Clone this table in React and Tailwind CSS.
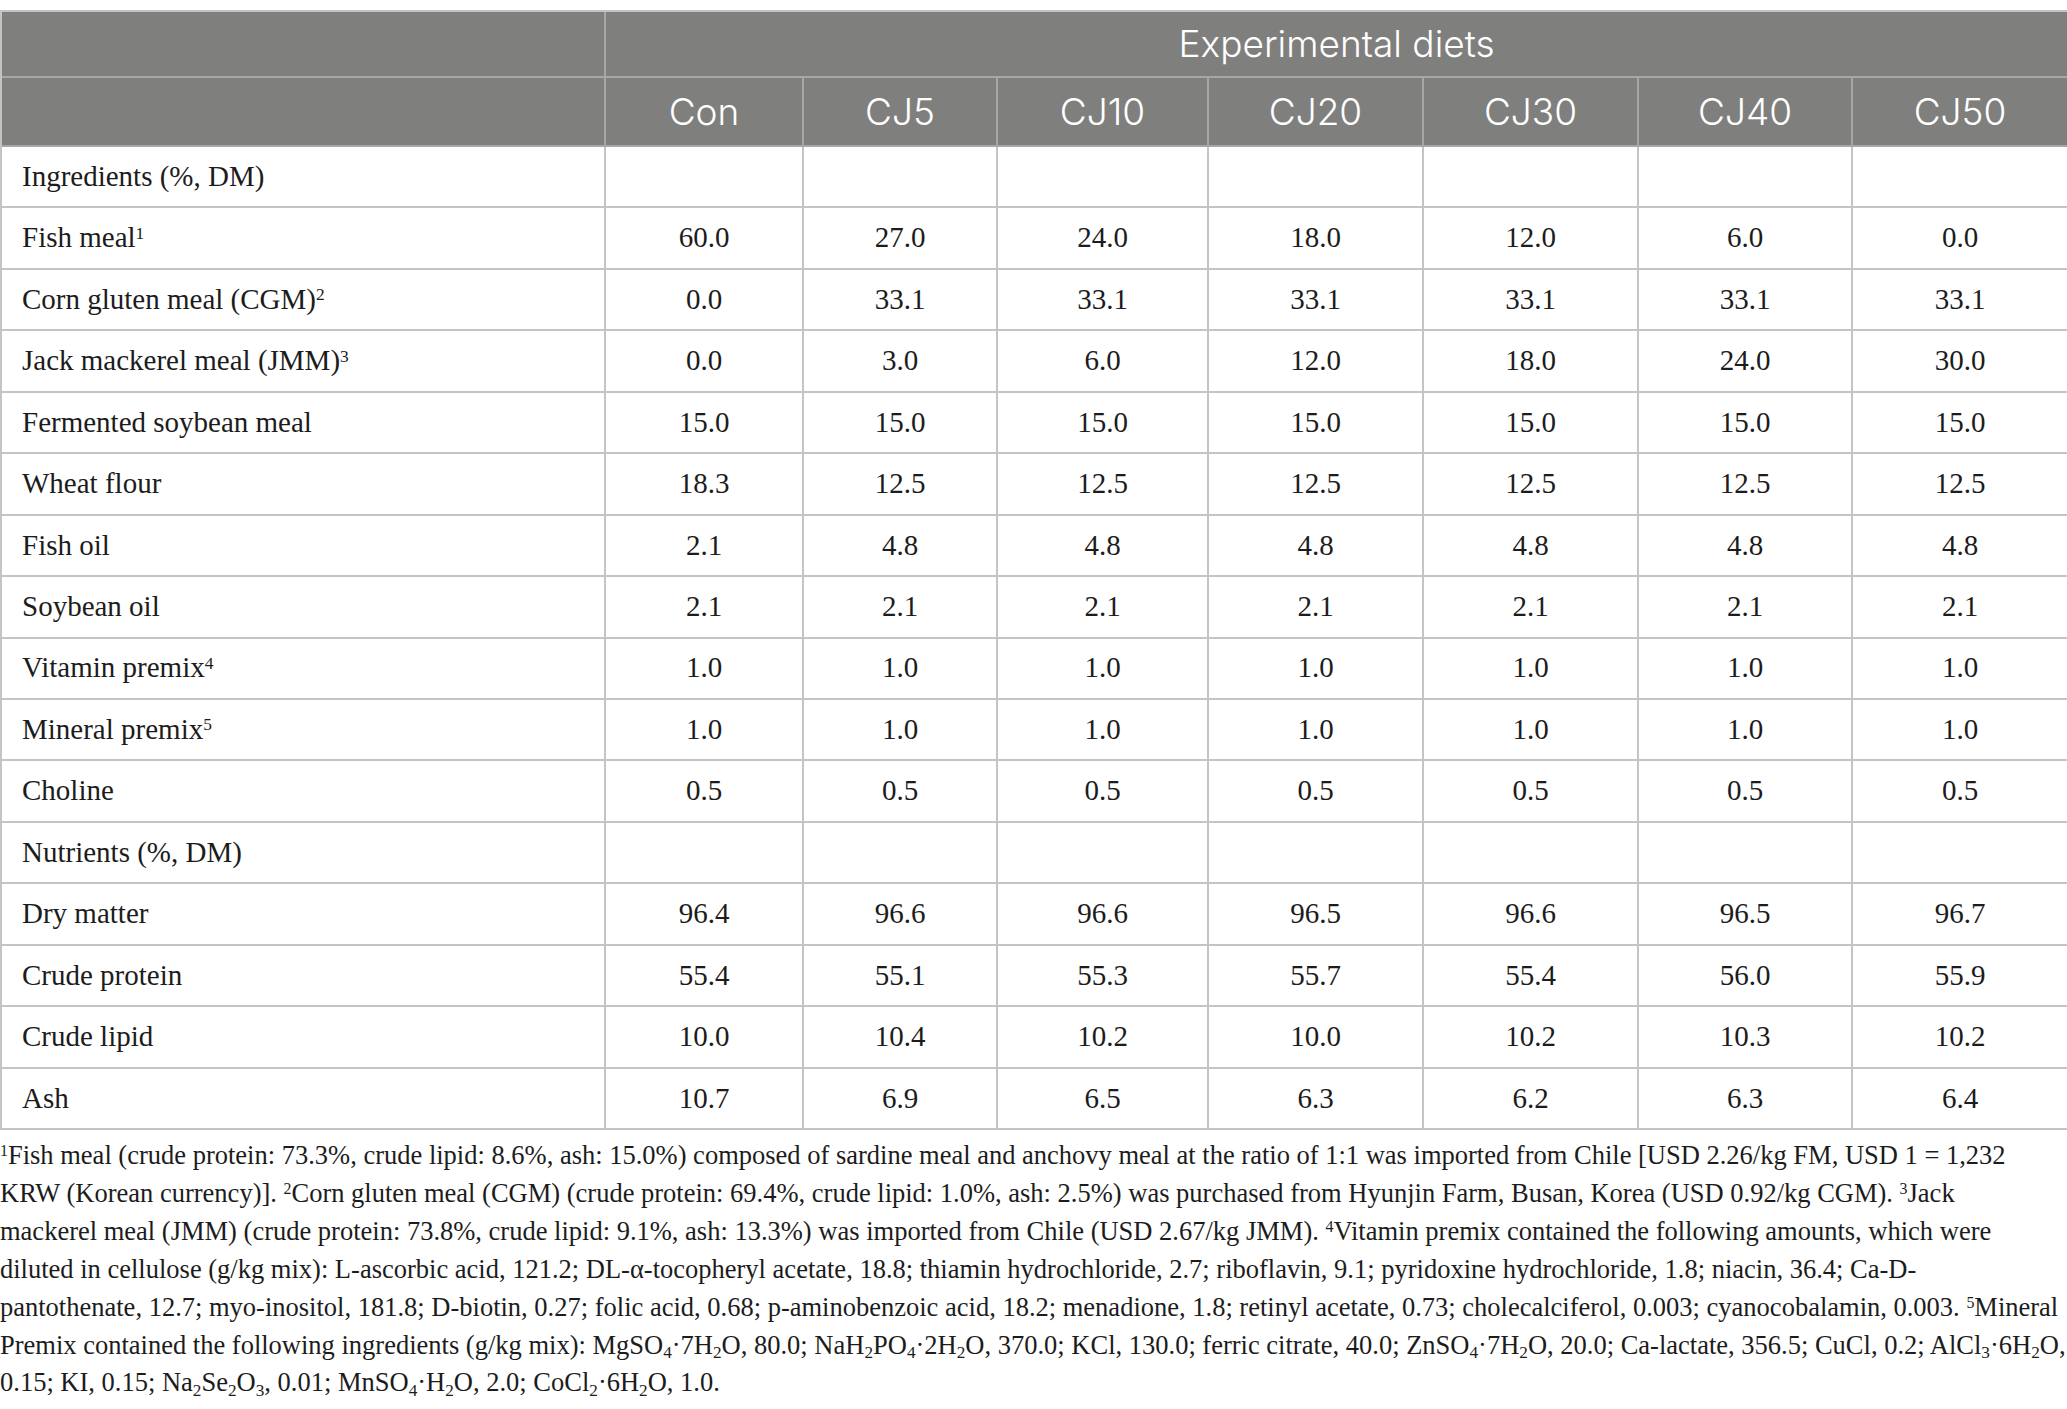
import React from "react";

const cols = ["Con", "CJ5", "CJ10", "CJ20", "CJ30", "CJ40", "CJ50"];

const rows = [
  { label: "Ingredients (%, DM)", vals: null },
  { label: "Fish meal", sup: "1", vals: ["60.0", "27.0", "24.0", "18.0", "12.0", "6.0", "0.0"] },
  { label: "Corn gluten meal (CGM)", sup: "2", vals: ["0.0", "33.1", "33.1", "33.1", "33.1", "33.1", "33.1"] },
  { label: "Jack mackerel meal (JMM)", sup: "3", vals: ["0.0", "3.0", "6.0", "12.0", "18.0", "24.0", "30.0"] },
  { label: "Fermented soybean meal", vals: ["15.0", "15.0", "15.0", "15.0", "15.0", "15.0", "15.0"] },
  { label: "Wheat flour", vals: ["18.3", "12.5", "12.5", "12.5", "12.5", "12.5", "12.5"] },
  { label: "Fish oil", vals: ["2.1", "4.8", "4.8", "4.8", "4.8", "4.8", "4.8"] },
  { label: "Soybean oil", vals: ["2.1", "2.1", "2.1", "2.1", "2.1", "2.1", "2.1"] },
  { label: "Vitamin premix", sup: "4", vals: ["1.0", "1.0", "1.0", "1.0", "1.0", "1.0", "1.0"] },
  { label: "Mineral premix", sup: "5", vals: ["1.0", "1.0", "1.0", "1.0", "1.0", "1.0", "1.0"] },
  { label: "Choline", vals: ["0.5", "0.5", "0.5", "0.5", "0.5", "0.5", "0.5"] },
  { label: "Nutrients (%, DM)", vals: null },
  { label: "Dry matter", vals: ["96.4", "96.6", "96.6", "96.5", "96.6", "96.5", "96.7"] },
  { label: "Crude protein", vals: ["55.4", "55.1", "55.3", "55.7", "55.4", "56.0", "55.9"] },
  { label: "Crude lipid", vals: ["10.0", "10.4", "10.2", "10.0", "10.2", "10.3", "10.2"] },
  { label: "Ash", vals: ["10.7", "6.9", "6.5", "6.3", "6.2", "6.3", "6.4"] },
];

const Sup = ({ children }) => <sup className="text-[0.6em]">{children}</sup>;
const Sub = ({ children }) => <sub className="text-[0.65em]">{children}</sub>;

export default function App() {
  return (
    <div className="w-[2067px] bg-white pt-[10px] font-['Liberation_Serif',serif] text-[#1c1c1c]">
      <div className="grid grid-cols-[604px_198px_194px_211px_215px_215px_214px_216px] border-t-2 border-l-2 border-[#c4c4c4]">
        {/* header row 1 */}
        <div className="h-[66px] bg-[#7f807e] border-r-2 border-b-2 border-[#a7a8a6]" />
        <div className="col-span-7 h-[66px] bg-[#7f807e] border-r-2 border-b-2 border-[#a7a8a6] flex items-center justify-center text-white font-['Inter',sans-serif] font-light text-[37px]">
          Experimental diets
        </div>
        {/* header row 2 */}
        <div className="h-[69px] bg-[#7f807e] border-r-2 border-b-2 border-[#a7a8a6]" />
        {cols.map((c) => (
          <div
            key={c}
            className="h-[69px] bg-[#7f807e] border-r-2 border-b-2 border-[#a7a8a6] flex items-center justify-center text-white font-['Inter',sans-serif] font-light text-[37px]"
          >
            {c}
          </div>
        ))}
        {/* body */}
        {rows.map((r) => (
          <React.Fragment key={r.label}>
            <div className="h-[61.44px] border-r-2 border-b-2 border-[#c4c4c4] flex items-center pl-[20px] text-[29px] whitespace-nowrap">
              <span>
                {r.label}
                {r.sup && <Sup>{r.sup}</Sup>}
              </span>
            </div>
            {Array.from({ length: 7 }).map((_, i) => (
              <div
                key={i}
                className="h-[61.44px] border-r-2 border-b-2 border-[#c4c4c4] flex items-center justify-center text-[29px]"
              >
                {r.vals ? r.vals[i] : ""}
              </div>
            ))}
          </React.Fragment>
        ))}
      </div>
      <div className="pt-[7px] text-[26.5px] leading-[37.9px] whitespace-nowrap">
        <div>
          <Sup>1</Sup>Fish meal (crude protein: 73.3%, crude lipid: 8.6%, ash: 15.0%) composed of sardine meal and anchovy meal at the ratio of 1:1 was imported from Chile [USD 2.26/kg FM, USD 1 = 1,232
        </div>
        <div>
          KRW (Korean currency)]. <Sup>2</Sup>Corn gluten meal (CGM) (crude protein: 69.4%, crude lipid: 1.0%, ash: 2.5%) was purchased from Hyunjin Farm, Busan, Korea (USD 0.92/kg CGM). <Sup>3</Sup>Jack
        </div>
        <div>
          mackerel meal (JMM) (crude protein: 73.8%, crude lipid: 9.1%, ash: 13.3%) was imported from Chile (USD 2.67/kg JMM). <Sup>4</Sup>Vitamin premix contained the following amounts, which were
        </div>
        <div>
          diluted in cellulose (g/kg mix): L-ascorbic acid, 121.2; DL-α-tocopheryl acetate, 18.8; thiamin hydrochloride, 2.7; riboflavin, 9.1; pyridoxine hydrochloride, 1.8; niacin, 36.4; Ca-D-
        </div>
        <div>
          pantothenate, 12.7; myo-inositol, 181.8; D-biotin, 0.27; folic acid, 0.68; p-aminobenzoic acid, 18.2; menadione, 1.8; retinyl acetate, 0.73; cholecalciferol, 0.003; cyanocobalamin, 0.003. <Sup>5</Sup>Mineral
        </div>
        <div>
          Premix contained the following ingredients (g/kg mix): MgSO<Sub>4</Sub>·7H<Sub>2</Sub>O, 80.0; NaH<Sub>2</Sub>PO<Sub>4</Sub>·2H<Sub>2</Sub>O, 370.0; KCl, 130.0; ferric citrate, 40.0; ZnSO<Sub>4</Sub>·7H<Sub>2</Sub>O, 20.0; Ca-lactate, 356.5; CuCl, 0.2; AlCl<Sub>3</Sub>·6H<Sub>2</Sub>O,
        </div>
        <div>
          0.15; KI, 0.15; Na<Sub>2</Sub>Se<Sub>2</Sub>O<Sub>3</Sub>, 0.01; MnSO<Sub>4</Sub>·H<Sub>2</Sub>O, 2.0; CoCl<Sub>2</Sub>·6H<Sub>2</Sub>O, 1.0.
        </div>
      </div>
    </div>
  );
}
